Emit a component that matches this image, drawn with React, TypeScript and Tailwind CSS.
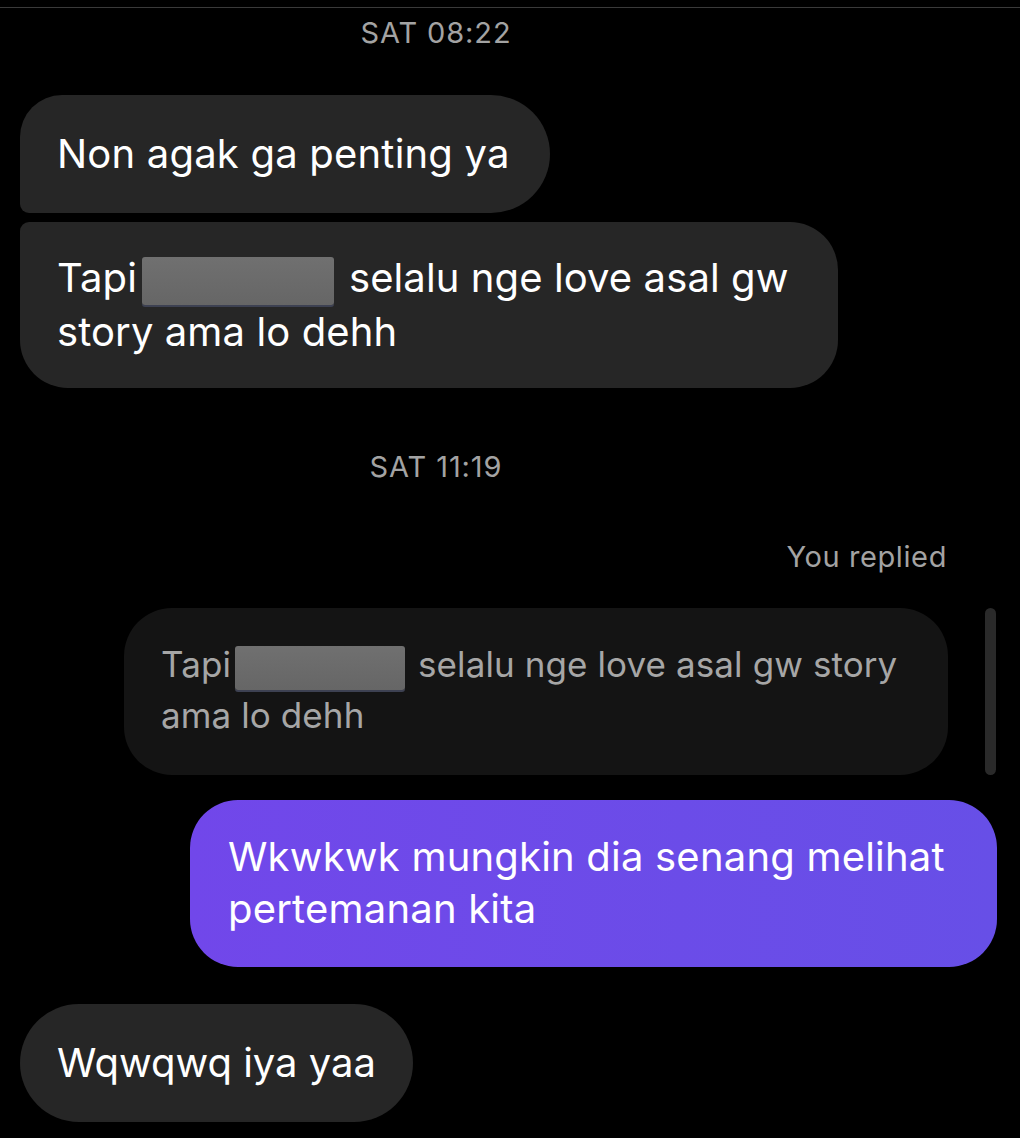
import React from "react";

function Blur({ w, h }: { w: number; h: number }) {
  return (
    <span
      className="inline-block align-middle rounded-[3px] bg-gradient-to-b from-[#707070] to-[#666666] shadow-[0_2px_0_#3d4152]"
      style={{ width: w, height: h }}
    />
  );
}

export default function App() {
  return (
    <div className="w-[1020px] h-[1138px] bg-black overflow-hidden font-['Inter','Liberation_Sans',sans-serif] flex flex-col">
      <div className="h-[7px] shrink-0" />
      <div className="h-px bg-[#3a3a3a] shrink-0" />
      <div className="w-[872px] text-center text-[29px] leading-[50px] text-[#a3a3a3] tracking-[0.9px] shrink-0">
        SAT 08:22
      </div>

      <div className="pl-[20px] mt-[37px] flex shrink-0">
        <div className="bg-[#262626] text-white text-[40px] tracking-[0.2px] leading-[54px] pl-[37px] pr-[40px] py-[32px] rounded-tl-[42px] rounded-bl-[9px] rounded-r-[59px]">
          Non agak ga penting ya
        </div>
      </div>

      <div className="pl-[20px] mt-[9px] flex shrink-0">
        <div className="w-[818px] bg-[#262626] text-white text-[40px] tracking-[0.1px] leading-[54px] pl-[37px] pr-[20px] py-[29px] rounded-tl-[9px] rounded-bl-[48px] rounded-r-[48px] whitespace-nowrap">
          Tapi<span className="inline-block w-[5px]" />
          <Blur w={192} h={48} />
          <span className="inline-block w-[15px]" />selalu nge love asal gw
          <br />
          story ama lo dehh
        </div>
      </div>

      <div className="mt-[54px] w-[872px] text-center text-[29px] leading-[50px] text-[#a3a3a3] tracking-[0.9px] shrink-0">
        SAT 11:19
      </div>

      <div className="mt-[40px] pr-[73px] text-right text-[29px] tracking-[0.6px] leading-[50px] text-[#a3a3a3] shrink-0">
        You replied
      </div>

      <div className="mt-[26px] pl-[124px] flex items-stretch gap-[37px] shrink-0">
        <div className="w-[824px] bg-[#141414] text-[#a6a6a6] text-[35px] tracking-[0.1px] leading-[51px] pl-[37px] pr-[20px] pt-[31px] pb-[34px] rounded-[48px] whitespace-nowrap">
          Tapi<span className="inline-block w-[4px]" />
          <Blur w={170} h={44} />
          <span className="inline-block w-[13px]" />selalu nge love asal gw story
          <br />
          ama lo dehh
        </div>
        <div className="w-[11px] rounded-full bg-[#2a2a2a]" />
      </div>

      <div className="mt-[25px] flex justify-end pr-[23px] shrink-0">
        <div className="w-[807px] bg-gradient-to-r from-[#7147ea] to-[#674fe7] text-white text-[40px] tracking-[0.2px] leading-[52px] pl-[38px] pr-[20px] pt-[31px] pb-[32px] rounded-[48px] whitespace-nowrap">
          Wkwkwk mungkin dia senang melihat
          <br />
          pertemanan kita
        </div>
      </div>

      <div className="pl-[20px] mt-[37px] flex shrink-0">
        <div className="bg-[#262626] text-white text-[40px] leading-[54px] pl-[37px] pr-[37px] py-[32px] rounded-[60px]">
          Wqwqwq iya yaa
        </div>
      </div>
    </div>
  );
}
